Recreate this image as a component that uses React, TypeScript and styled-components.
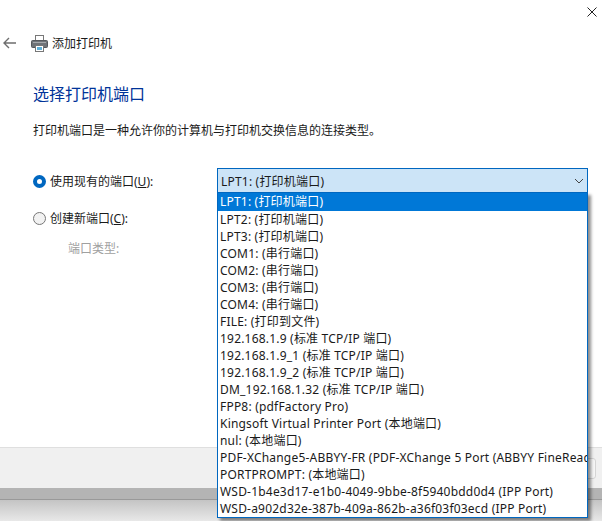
import styled, { createGlobalStyle } from 'styled-components';

const ports = [
  'LPT1: (打印机端口)',
  'LPT2: (打印机端口)',
  'LPT3: (打印机端口)',
  'COM1: (串行端口)',
  'COM2: (串行端口)',
  'COM3: (串行端口)',
  'COM4: (串行端口)',
  'FILE: (打印到文件)',
  '192.168.1.9 (标准 TCP/IP 端口)',
  '192.168.1.9_1 (标准 TCP/IP 端口)',
  '192.168.1.9_2 (标准 TCP/IP 端口)',
  'DM_192.168.1.32 (标准 TCP/IP 端口)',
  'FPP8: (pdfFactory Pro)',
  'Kingsoft Virtual Printer Port (本地端口)',
  'nul: (本地端口)',
  'PDF-XChange5-ABBYY-FR (PDF-XChange 5 Port (ABBYY FineReader))',
  'PORTPROMPT: (本地端口)',
  'WSD-1b4e3d17-e1b0-4049-9bbe-8f5940bdd0d4 (IPP Port)',
  'WSD-a902d32e-387b-409a-862b-a36f03f03ecd (IPP Port)',
];

const GlobalStyle = createGlobalStyle`
  html, body {
    margin: 0;
    padding: 0;
    background: #ffffff;
  }
  body {
    font-family: "Noto Sans", "Noto Sans CJK SC", sans-serif;
    font-size: 12px;
    color: #1a1a1a;
    overflow: hidden;
  }
`;

export default function App() {
  return (
    <>
      <GlobalStyle />
      <Page>
        <TitleBar>
          <svg width="10" height="10" viewBox="0 0 10 10">
            <path d="M0.5 0.5 L9.5 9.5 M9.5 0.5 L0.5 9.5" stroke="#222" strokeWidth="1" fill="none" />
          </svg>
        </TitleBar>
        <NavRow>
          <svg width="13" height="12" viewBox="0 0 13 12">
            <path d="M6 1 L1 6 L6 11 M1 6 H13" stroke="#6e6e6e" strokeWidth="1.4" fill="none" />
          </svg>
          <PrinterIcon />
          <NavTitle>添加打印机</NavTitle>
        </NavRow>
        <Content>
          <Heading>选择打印机端口</Heading>
          <Description>打印机端口是一种允许你的计算机与打印机交换信息的连接类型。</Description>
          <FormRow>
            <RadioLabel>
              <Radio $checked />
              <span>使用现有的端口(<u>U</u>):</span>
            </RadioLabel>
            <SelectArea>
              <SelectBox>
                <span>LPT1: (打印机端口)</span>
                <svg width="10" height="6" viewBox="0 0 10 6">
                  <path d="M1 1 L5 5 L9 1" stroke="#444" strokeWidth="1" fill="none" />
                </svg>
              </SelectBox>
              <DropList>
                {ports.map((port, i) => (
                  <DropItem key={port} $selected={i === 0}>{port}</DropItem>
                ))}
              </DropList>
            </SelectArea>
          </FormRow>
          <NewPortRow>
            <RadioLabel>
              <Radio />
              <span>创建新端口(<u>C</u>):</span>
            </RadioLabel>
          </NewPortRow>
          <PortType>端口类型:</PortType>
        </Content>
        <Footer>
          <FooterButton />
        </Footer>
        <ShadowBand />
        <BelowWindow />
      </Page>
    </>
  );
}

function PrinterIcon() {
  return (
    <svg width="17" height="17" viewBox="0 0 17 17">
      <rect x="4.5" y="0.5" width="8" height="6" fill="#fff" stroke="#777" />
      <rect x="0.5" y="5.5" width="16" height="7" rx="1" fill="#6f7378" stroke="#55585c" />
      <rect x="2" y="7" width="13" height="1" fill="#a5a8ab" />
      <rect x="4.5" y="10.5" width="8" height="6" fill="#fff" stroke="#777" />
      <rect x="6" y="12" width="5" height="3" fill="#5fb0d8" />
    </svg>
  );
}

const Page = styled.div`
  width: 602px;
  height: 521px;
  display: flex;
  flex-direction: column;
  background: #ffffff;
  overflow: hidden;
`;
const TitleBar = styled.div`
  height: 22px;
  display: flex;
  justify-content: flex-end;
  align-items: flex-start;
  padding: 7px 5px 0 0;
  flex: none;
`;
const NavRow = styled.div`
  display: flex;
  align-items: center;
  height: 28px;
  padding-left: 3px;
  flex: none;
  svg:nth-child(2) {
    margin-left: 15px;
  }
`;
const NavTitle = styled.div`
  margin-left: 4px;
  font-size: 12px;
  color: #1a1a1a;
`;
const Content = styled.div`
  flex: 1;
  padding: 27px 14px 0 33px;
  display: flex;
  flex-direction: column;
`;
const Heading = styled.div`
  font-size: 16px;
  line-height: 20px;
  color: #003399;
`;
const Description = styled.div`
  margin-top: 18px;
  line-height: 18px;
  font-size: 12px;
`;
const FormRow = styled.div`
  margin-top: 28px;
  display: flex;
  align-items: flex-start;
`;
const NewPortRow = styled.div`
  margin-top: 12px;
`;
const RadioLabel = styled.label`
  display: flex;
  align-items: center;
  gap: 4px;
  width: 184px;
  height: 24px;
  flex: none;
  margin-top: 1px;
`;
const Radio = styled.span<{ $checked?: boolean }>`
  width: 13px;
  height: 13px;
  box-sizing: border-box;
  border-radius: 50%;
  flex: none;
  background: ${p => (p.$checked ? '#ffffff' : '#f2f2f2')};
  border: ${p => (p.$checked ? '4px solid #0067c0' : '1px solid #777777')};
`;
const SelectArea = styled.div`
  position: relative;
  flex: 1;
  letter-spacing: 0.2px;
`;
const SelectBox = styled.div`
  height: 25px;
  box-sizing: border-box;
  border: 1px solid #0067c0;
  background: #cce4f7;
  display: flex;
  align-items: center;
  justify-content: space-between;
  padding: 0 3px 0 3px;
`;
const DropList = styled.div`
  position: absolute;
  left: 0;
  top: 24px;
  width: 371px;
  height: 326px;
  box-sizing: border-box;
  border: 1px solid #0067c0;
  background: #ffffff;
  box-shadow: 3px 3px 3px rgba(0, 0, 0, 0.45);
  overflow: hidden;
`;
const DropItem = styled.div<{ $selected?: boolean }>`
  height: ${p => (p.$selected ? '18px' : '17px')};
  line-height: ${p => (p.$selected ? '18px' : '17px')};
  padding-left: 2px;
  white-space: nowrap;
  background: ${p => (p.$selected ? '#0078d7' : 'transparent')};
  color: ${p => (p.$selected ? '#ffffff' : '#1a1a1a')};
`;
const PortType = styled.div`
  margin: 9px 0 0 35px;
  color: #a0a0a0;
`;
const Footer = styled.div`
  height: 40px;
  background: #f0f0f0;
  border-top: 1px solid #dfdfdf;
  flex: none;
  display: flex;
  justify-content: flex-end;
  align-items: center;
  padding-right: 6px;
`;
const FooterButton = styled.div`
  width: 70px;
  height: 21px;
  box-sizing: border-box;
  background: #f6f6f6;
  border: 1px solid #d4d4d4;
  border-radius: 3px;
`;
const ShadowBand = styled.div`
  height: 11px;
  flex: none;
  background: #b4b4b4;
  border-bottom: 1px solid #999999;
`;
const BelowWindow = styled.div`
  height: 21px;
  flex: none;
  background: linear-gradient(#c4c4c4, #e8e8e8);
`;
